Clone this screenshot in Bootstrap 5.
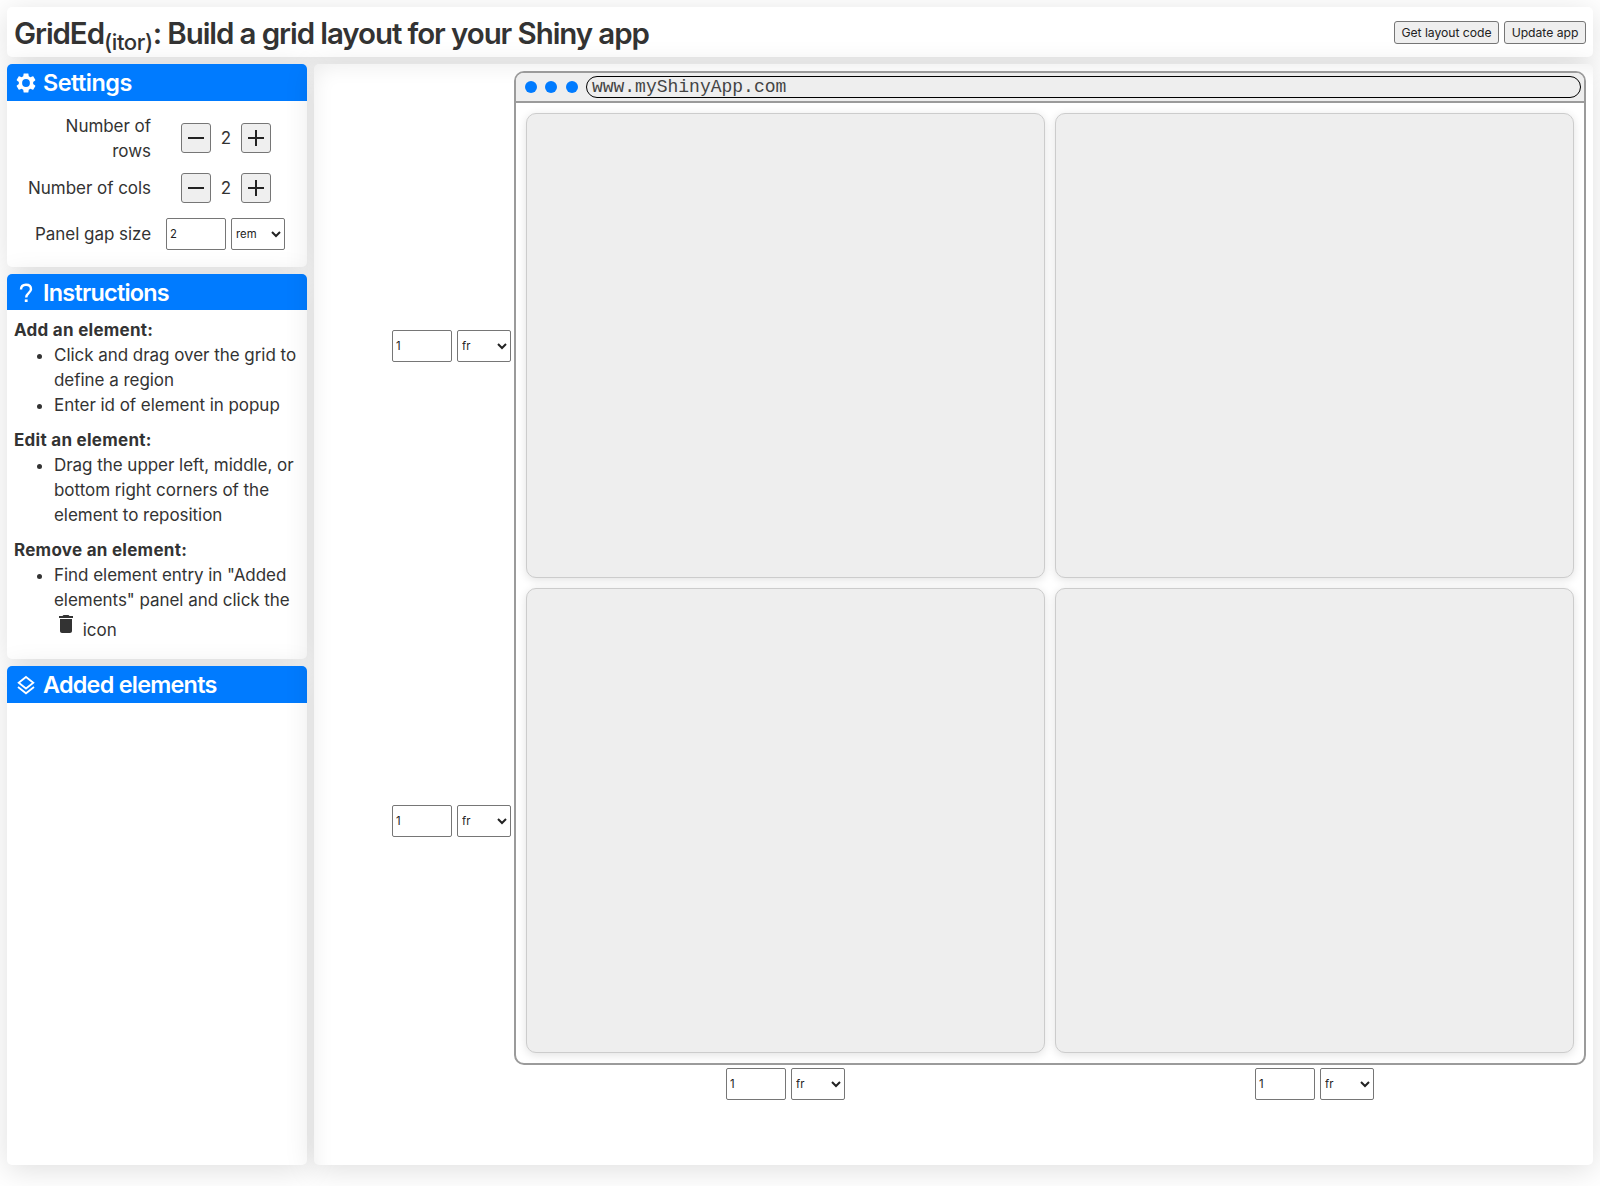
<!DOCTYPE html>
<html lang="en">
<head>
<meta charset="utf-8">
<meta name="viewport" content="width=device-width, initial-scale=1">
<title>GridEd</title>
<link rel="stylesheet" href="https://cdn.jsdelivr.net/npm/bootstrap@5.3.0/dist/css/bootstrap.min.css">
<style>
:root { --accent: #007bff; --ink: #333; --edge: #767676; }
body { font-family: Inter, "Liberation Sans", sans-serif; font-size: 17px; line-height: 25px; letter-spacing: -.04px; color: var(--ink); background: #fff; }
.app { display: grid; height: 1186px; padding: 7px 7px 21px; gap: 7px; grid-template: 50px minmax(0, 1fr) / 300px minmax(0, 1fr); overflow: hidden; }
.app-header { grid-column: 1 / -1; padding: 0 7px; }
.app-header h1 { padding-top: 4px; font-size: 29.5px; font-weight: 600; line-height: 1.2; letter-spacing: -1.09px; }
.app-header sub { font-size: .75em; font-weight: 500; letter-spacing: -.4px; }
.panel { background: #fff; border-radius: 5px; box-shadow: 0 5px 30px rgba(0, 0, 0, .13); }
.sidebar { gap: 7px; }
.panel-title { height: 37px; padding-left: 9px; gap: 7px; margin: 0; font-size: 23.4px; font-weight: 600; letter-spacing: -.75px; line-height: 37px; color: #fff; background: var(--accent); border-radius: 5px 5px 0 0; }
.settings-panel { height: 203px; }
.settings-panel .panel-title { letter-spacing: -.5px; }
.instructions-panel { height: 385px; }
.instructions-panel .panel-title { height: 36px; }
.settings-body { padding: 12px 21px 0 14px; }
.setting { display: grid; grid-template-columns: 130px 1fr; align-items: center; column-gap: 15px; text-align: right; }
.two-line { padding-top: 1px; margin-bottom: -1px; }
.tool-btn { padding: 0; border: 1px solid var(--edge); border-radius: 3px; background: #efefef; color: #222; }
.step-btn { width: 30px; height: 30px; }
.small-btn { height: 23px; font-size: 12.2px; line-height: 21px; letter-spacing: -.03px; }
.size-input, .size-unit { height: 32px; border: 1px solid var(--edge); border-radius: 2px; background: #fff; font-size: 11.3px; letter-spacing: 0; color: #222; }
.size-input { width: 60px; padding: 0 3px; }
.size-unit { width: 54px; padding: 0; }
.unit-pair { gap: 5px; }
.instructions-body { padding: 8px 4px 0 7px; }
.instructions-body ul { padding-left: 40px; margin-bottom: 10px; }
.instructions-body b { font-weight: 700; letter-spacing: .27px; }
.trash { vertical-align: baseline; margin-top: -1px; }
.editor { display: grid; padding: 7px; grid-template: 994px 1fr / 193px 1fr; box-shadow: 0 5px 30px rgba(0, 0, 0, .13), inset 10px 12px 20px -9px rgba(0, 0, 0, .07); }
.row-sizes { padding: 42px 3px 12px 0; gap: 10px; }
.col-sizes { grid-column: 2; padding: 3px 12px 0; gap: 10px; }
.browser { border: 2px solid #9b9b9b; border-radius: 10px; overflow: hidden; background: #fff; }
.browser-bar { height: 30px; padding: 0 3px 0 9px; background: #eee; border-bottom: 2px solid #9b9b9b; }
.browser-dot { width: 12px; height: 12px; margin-right: 8.3px; border-radius: 50%; background: var(--accent); }
.browser-url { height: 22px; padding-left: 5px; border: 1px solid #000; border-radius: 11px; font: 18px/20px "Liberation Mono", monospace; letter-spacing: 0; color: #444; }
.cells { display: grid; grid-template: 1fr 1fr / 1fr 1fr; gap: 10px; padding: 10px; }
.cell-box { border: 1px solid #ccc; border-radius: 10px; background: #eee; box-shadow: 0 2px 10px rgba(0, 0, 0, .12); }
</style>
<script src="https://cdn.jsdelivr.net/npm/bootstrap@5.3.0/dist/js/bootstrap.bundle.min.js"></script>
</head>
<body>
<div class="app">
  <header class="app-header panel d-flex align-items-center justify-content-between">
    <h1 class="m-0">GridEd<sub>(itor)</sub>: Build a grid layout for your Shiny app</h1>
    <div class="d-flex unit-pair">
      <button class="tool-btn small-btn" style="width:105px">Get layout code</button>
      <button class="tool-btn small-btn" style="width:82px">Update app</button>
    </div>
  </header>

  <aside class="sidebar d-flex flex-column">
    <section class="panel settings-panel">
      <h2 class="panel-title d-flex align-items-center">
        <svg width="20" height="20" viewBox="2 2 20 20" fill="currentColor"><path fill-rule="evenodd" d="M19.14 12.94c.04-.3.06-.61.06-.94 0-.32-.02-.64-.07-.94l2.03-1.58c.18-.14.23-.41.12-.61l-1.92-3.32c-.12-.22-.37-.29-.59-.22l-2.39.96c-.5-.38-1.03-.7-1.62-.94l-.36-2.54c-.04-.24-.24-.41-.48-.41h-3.84c-.24 0-.43.17-.47.41l-.36 2.54c-.59.24-1.13.57-1.62.94l-2.39-.96c-.22-.08-.47 0-.59.22L2.74 8.87c-.12.21-.08.47.12.61l2.03 1.58c-.05.3-.09.63-.09.94s.02.64.07.94l-2.03 1.58c-.18.14-.23.41-.12.61l1.92 3.32c.12.22.37.29.59.22l2.39-.96c.5.38 1.03.7 1.62.94l.36 2.54c.05.24.24.41.48.41h3.84c.24 0 .44-.17.47-.41l.36-2.54c.59-.24 1.13-.56 1.62-.94l2.39.96c.22.08.47 0 .59-.22l1.92-3.32c.12-.22.07-.47-.12-.61l-2.01-1.58zM12 15.9a3.9 3.9 0 1 1 0-7.8 3.9 3.9 0 0 1 0 7.8z"/></svg>
        Settings
      </h2>
      <div class="settings-body">
        <div class="setting">
          <span class="two-line">Number of<br>rows</span>
          <div class="d-flex justify-content-center align-items-center">
            <button class="tool-btn step-btn d-flex align-items-center justify-content-center" aria-label="Remove row"><svg width="18" height="18" stroke="currentColor" stroke-width="2"><path d="M1 9h16"/></svg></button>
            <span class="text-center" style="width:30px">2</span>
            <button class="tool-btn step-btn d-flex align-items-center justify-content-center" aria-label="Add row"><svg width="18" height="18" stroke="currentColor" stroke-width="2"><path d="M1 9h16M9 1v16"/></svg></button>
          </div>
        </div>
        <div class="setting" style="margin-top:10px">
          <span>Number of cols</span>
          <div class="d-flex justify-content-center align-items-center">
            <button class="tool-btn step-btn d-flex align-items-center justify-content-center" aria-label="Remove column"><svg width="18" height="18" stroke="currentColor" stroke-width="2"><path d="M1 9h16"/></svg></button>
            <span class="text-center" style="width:30px">2</span>
            <button class="tool-btn step-btn d-flex align-items-center justify-content-center" aria-label="Add column"><svg width="18" height="18" stroke="currentColor" stroke-width="2"><path d="M1 9h16M9 1v16"/></svg></button>
          </div>
        </div>
        <div class="setting" style="margin-top:15px">
          <span>Panel gap size</span>
          <div class="unit-pair d-flex"><input class="size-input" value="2" aria-label="Gap size"><select class="size-unit" aria-label="Gap unit"><option>rem</option><option>px</option></select></div>
        </div>
      </div>
    </section>

    <section class="panel instructions-panel">
      <h2 class="panel-title d-flex align-items-center">
        <svg width="20" height="20" viewBox="0 -1.500 20 20" fill="none" stroke="currentColor" stroke-width="2.4"><path d="M5 6C5 3 7 1.200 10 1.200S15 3 15 5.700C15 9.300 10.200 9.400 10.200 14"/><path d="M8.800 17.200h2.800" stroke-width="2.600"/></svg>
        Instructions
      </h2>
      <div class="instructions-body">
        <b>Add an element:</b>
        <ul>
          <li>Click and drag over the grid to define a region</li>
          <li>Enter id of element in popup</li>
        </ul>
        <b>Edit an element:</b>
        <ul>
          <li>Drag the upper left, middle, or bottom right corners of the element to reposition</li>
        </ul>
        <b>Remove an element:</b>
        <ul>
          <li>Find element entry in "Added elements" panel and click the <svg class="trash" width="24" height="24" viewBox="0 0 24 24" fill="currentColor"><path d="M6 19c0 1.100.9 2 2 2h8c1.100 0 2-.9 2-2V7H6v12zM19 4h-3.500l-1-1h-5l-1 1H5v2h14V4z"/></svg> icon</li>
        </ul>
      </div>
    </section>

    <section class="panel flex-grow-1">
      <h2 class="panel-title d-flex align-items-center">
        <svg width="20" height="20" viewBox="0 0 20 20" fill="none" stroke="currentColor" stroke-width="1.8"><path d="M10 2l7.300 5.800L10 13.500 2.700 7.800z"/><path d="M2 12l8 6.300 8-6.300"/></svg>
        Added elements
      </h2>
    </section>
  </aside>

  <main class="panel editor">
    <div class="row-sizes d-flex flex-column">
      <div class="unit-pair d-flex flex-fill align-items-center justify-content-end"><input class="size-input" value="1" aria-label="Row 1 size"><select class="size-unit" aria-label="Row 1 unit"><option>fr</option><option>px</option></select></div>
      <div class="unit-pair d-flex flex-fill align-items-center justify-content-end"><input class="size-input" value="1" aria-label="Row 2 size"><select class="size-unit" aria-label="Row 2 unit"><option>fr</option><option>px</option></select></div>
    </div>
    <div class="browser d-flex flex-column">
      <div class="browser-bar d-flex align-items-center">
        <span class="browser-dot"></span><span class="browser-dot"></span><span class="browser-dot"></span>
        <div class="browser-url flex-grow-1">www.myShinyApp.com</div>
      </div>
      <div class="cells flex-grow-1">
        <div class="cell-box"></div><div class="cell-box"></div>
        <div class="cell-box"></div><div class="cell-box"></div>
      </div>
    </div>
    <div class="col-sizes d-flex align-items-start">
      <div class="unit-pair d-flex flex-fill justify-content-center"><input class="size-input" value="1" aria-label="Column 1 size"><select class="size-unit" aria-label="Column 1 unit"><option>fr</option><option>px</option></select></div>
      <div class="unit-pair d-flex flex-fill justify-content-center"><input class="size-input" value="1" aria-label="Column 2 size"><select class="size-unit" aria-label="Column 2 unit"><option>fr</option><option>px</option></select></div>
    </div>
  </main>
</div>
</body>
</html>
